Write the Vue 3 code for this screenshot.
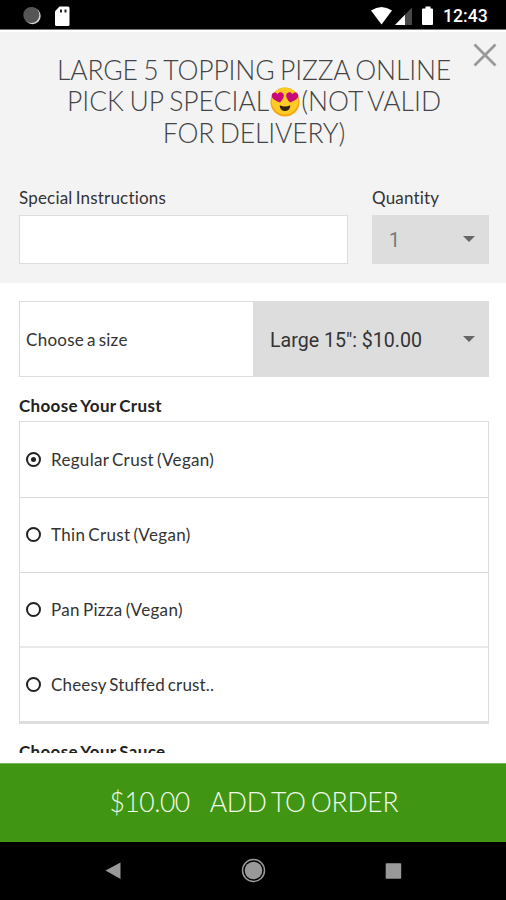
<script setup>
import { ref } from 'vue'

const crusts = ['Regular Crust (Vegan)', 'Thin Crust (Vegan)', 'Pan Pizza (Vegan)', 'Cheesy Stuffed crust..']
const selected = ref(0)
const instructions = ref('')
</script>

<template>
  <div class="screen">
    <header class="status">
      <svg class="notices" viewBox="0 0 50 22">
        <circle cx="9.5" cy="11" r="8.2" fill="#d5d5d5" />
        <circle cx="8.3" cy="10" r="8" fill="#555" />
        <path d="M36.5 1.5H45a1.5 1.5 0 0 1 1.5 1.5v16.5a1.5 1.5 0 0 1-1.5 1.5H33.5a1.5 1.5 0 0 1-1.5-1.5V6.3z" fill="#fff" />
        <path d="M37 4.5h2v3h-2zM41.5 4.5h2v3h-2z" fill="#222" />
      </svg>
      <svg class="signals" viewBox="0 0 66 22">
        <path d="M0 5.500Q10.500-1.500 21 5.500L10.500 19.500z" fill="#fff" />
        <path d="M41 2.500V20H24z" fill="#484848" />
        <path d="M34 9.700V20H24z" fill="#fff" />
        <path d="M54.500 1.500h5v2h1.500a1 1 0 0 1 1 1V19a1 1 0 0 1-1 1h-9a1 1 0 0 1-1-1V4.500a1 1 0 0 1 1-1h2.500z" fill="#fff" />
      </svg>
      <span class="clock">12:43</span>
    </header>

    <section class="intro">
      <button class="close" aria-label="Close">
        <svg viewBox="0 0 24 24"><path d="M1.500 1.500l21 21M22.500 1.500l-21 21" /></svg>
      </button>
      <h1>
        <span class="line first">LARGE 5 TOPPING PIZZA ONLINE</span>
        <span class="line second">PICK UP SPECIAL<svg class="emoji" viewBox="0 0 30 30">
          <circle cx="15" cy="15" r="14.500" fill="#f5a514" />
          <circle cx="15" cy="14" r="13.300" fill="#ffcb24" />
          <path d="M10 15.500C5 13.500 .8 11 1.800 7.700c.8-2.700 4.500-2.900 5.800-.5C9 4.500 13.300 4.800 13.800 8c.4 2.500-1.700 5-3.800 7.500z" fill="#c80778" />
          <path d="M20 15.500c5-2 9.200-4.500 8.200-7.800-.8-2.700-4.500-2.900-5.800-.5C21 4.500 16.700 4.800 16.200 8c-.4 2.500 1.700 5 3.800 7.500z" fill="#c80778" />
          <path d="M10.300 18.500q4.700 1.800 9.400 0 .8 0 .6 1-1.200 4.500-5.300 4.500t-5.300-4.500q-.2-1 .6-1z" fill="#302113" />
        </svg>(NOT VALID</span>
        <span class="line third">FOR DELIVERY)</span>
      </h1>
      <div class="fields">
        <label class="notes">
          <span class="caption">Special Instructions</span>
          <input v-model="instructions" type="text" />
        </label>
        <div class="quantity">
          <span class="caption">Quantity</span>
          <div class="select"><span class="num">1</span><i class="arrow"></i></div>
        </div>
      </div>
    </section>

    <main class="options">
      <div class="size">
        <span class="size-label">Choose a size</span>
        <div class="select size-select"><span class="size-value">Large 15": $10.00</span><i class="arrow"></i></div>
      </div>
      <h2>Choose Your Crust</h2>
      <ul>
        <li v-for="(name, i) in crusts" :key="name" @click="selected = i">
          <i class="radio" :class="{ checked: selected === i }"></i>
          <span>{{ name }}</span>
        </li>
      </ul>
      <h2 class="sauce">Choose Your Sauce</h2>
    </main>

    <button class="order"><span class="price">$10.00</span><span class="add">ADD TO ORDER</span></button>

    <nav class="system">
      <svg viewBox="0 0 506 58">
        <path d="M105.500 28.500L120.500 20.500V37z" fill="#999" />
        <circle cx="253.500" cy="28.500" r="11" fill="none" stroke="#999" stroke-width="1.500" />
        <circle cx="253.500" cy="28.500" r="8.800" fill="#999" />
        <rect x="385.700" y="21.300" width="15.500" height="15.500" rx=".8" fill="#999" />
      </svg>
    </nav>
  </div>
</template>

<style>
body { margin: 0; background: #fff; }
</style>

<style scoped>
* { box-sizing: border-box; }
.screen { width: 506px; height: 900px; display: flex; flex-direction: column; overflow: hidden; background: #fff; color: #333; font-family: Lato, sans-serif; }
button { border: 0; padding: 0; font: inherit; }
.status { height: 30px; flex: none; display: flex; align-items: center; background: #000; border-bottom: 1px solid #777; padding: 2px 16px 0 23px; }
.notices { width: 50px; height: 22px; display: block; }
.signals { width: 66px; height: 22px; margin-left: auto; display: block; }
.clock { width: 47px; margin-left: 6px; color: #fff; font: 500 17.600px/22px Roboto, sans-serif; white-space: nowrap; }
.intro { position: relative; height: 253px; flex: none; background: #f3f3f3; border-top: 2px solid #fff; padding: 23px 17px 0 19px; }
.close { position: absolute; top: 11px; right: 9px; width: 24px; height: 24px; background: none; }
.close svg { display: block; width: 24px; height: 24px; fill: none; stroke: #999; stroke-width: 2.7; }
h1 { margin: 0; font-size: 26.500px; line-height: 31.500px; font-weight: 300; color: #444; display: flex; flex-direction: column; align-items: center; white-space: nowrap; letter-spacing: -.15px; word-spacing: -1.500px; }
.line { display: flex; align-items: center; height: 31.500px; }
.second { height: 31px; line-height: 31px; padding-bottom: 1px; letter-spacing: 0; }
.third { height: 32px; }
.emoji { width: 30px; height: 30px; margin: 0 1px; }
.fields { display: flex; gap: 24px; padding-top: 37px; }
.notes { width: 329px; }
.caption { display: block; font-size: 17px; line-height: 22px; height: 28px; white-space: nowrap; letter-spacing: .18px; word-spacing: -1.200px; font-variant-ligatures: none; }
input { display: block; width: 100%; height: 49px; border: 1px solid #ddd; border-radius: 0; background: #fff; padding: 0 12px; outline: 0; }
.quantity { width: 117px; }
.select { display: flex; align-items: center; justify-content: space-between; background: #ddd; font-family: Roboto, sans-serif; font-size: 19.600px; padding: 0 14px 0 17px; }
.quantity .select { height: 49px; color: #777; }
.num { padding-top: 2px; }
.arrow { width: 0; height: 0; border: 6.500px solid transparent; border-top: 6.500px solid #666; border-bottom: 0; margin-top: -1px; }
.options { height: 470px; flex: none; overflow: hidden; padding: 18px 17px 0 19px; }
.size { height: 76px; display: flex; border: 1px solid #ddd; }
.size-label { width: 233px; padding-left: 6px; font-size: 17px; line-height: 75px; letter-spacing: .27px; word-spacing: -1.700px; }
.size-select { flex: 1; padding-right: 13px; color: #333; }
.size-value { padding-top: 2px; }
h2 { width: max-content; margin: 18px 0 5px; font-size: 17px; line-height: 21px; font-weight: 700; color: #222; white-space: nowrap; letter-spacing: .33px; word-spacing: -1.300px; }
ul { list-style: none; margin: 0; padding: 0; border: 1px solid #ddd; border-bottom: 3px solid #ddd; height: 303px; }
li { height: 75px; display: flex; align-items: center; padding: 0 0 1px 6px; border-bottom: 1px solid #d9d9d9; font-size: 17px; white-space: nowrap; letter-spacing: .32px; word-spacing: -1.600px; }
li:first-child { height: 76px; padding: 0 0 1px 6px; }
li:nth-child(3) { border-bottom: 2px solid #e9e9e9; padding-bottom: 0; }
li:last-child { height: 73px; padding: 0 0 0 6px; border-bottom: 0; letter-spacing: .16px; }
.radio { width: 15px; height: 15px; border: 2px solid #222; border-radius: 50%; margin-right: 10px; display: grid; place-items: center; }
.radio.checked::after { content: ''; width: 5px; height: 5px; border-radius: 50%; background: #222; }
.sauce { height: 12px; overflow: hidden; margin: 17px 0 0; }
.order { height: 79px; margin-top: 10px; flex: none; background: #409613; border-top: 1px solid #75b557; color: #f2fbee; font-size: 26.500px; font-weight: 300; line-height: 77px; display: flex; justify-content: center; gap: 20px; white-space: nowrap; padding-left: 2px; }
.price { letter-spacing: -.5px; }
.add { letter-spacing: -.2px; word-spacing: -2px; }
.system { height: 58px; flex: none; background: #000; }
.system svg { display: block; width: 506px; height: 58px; }
</style>
